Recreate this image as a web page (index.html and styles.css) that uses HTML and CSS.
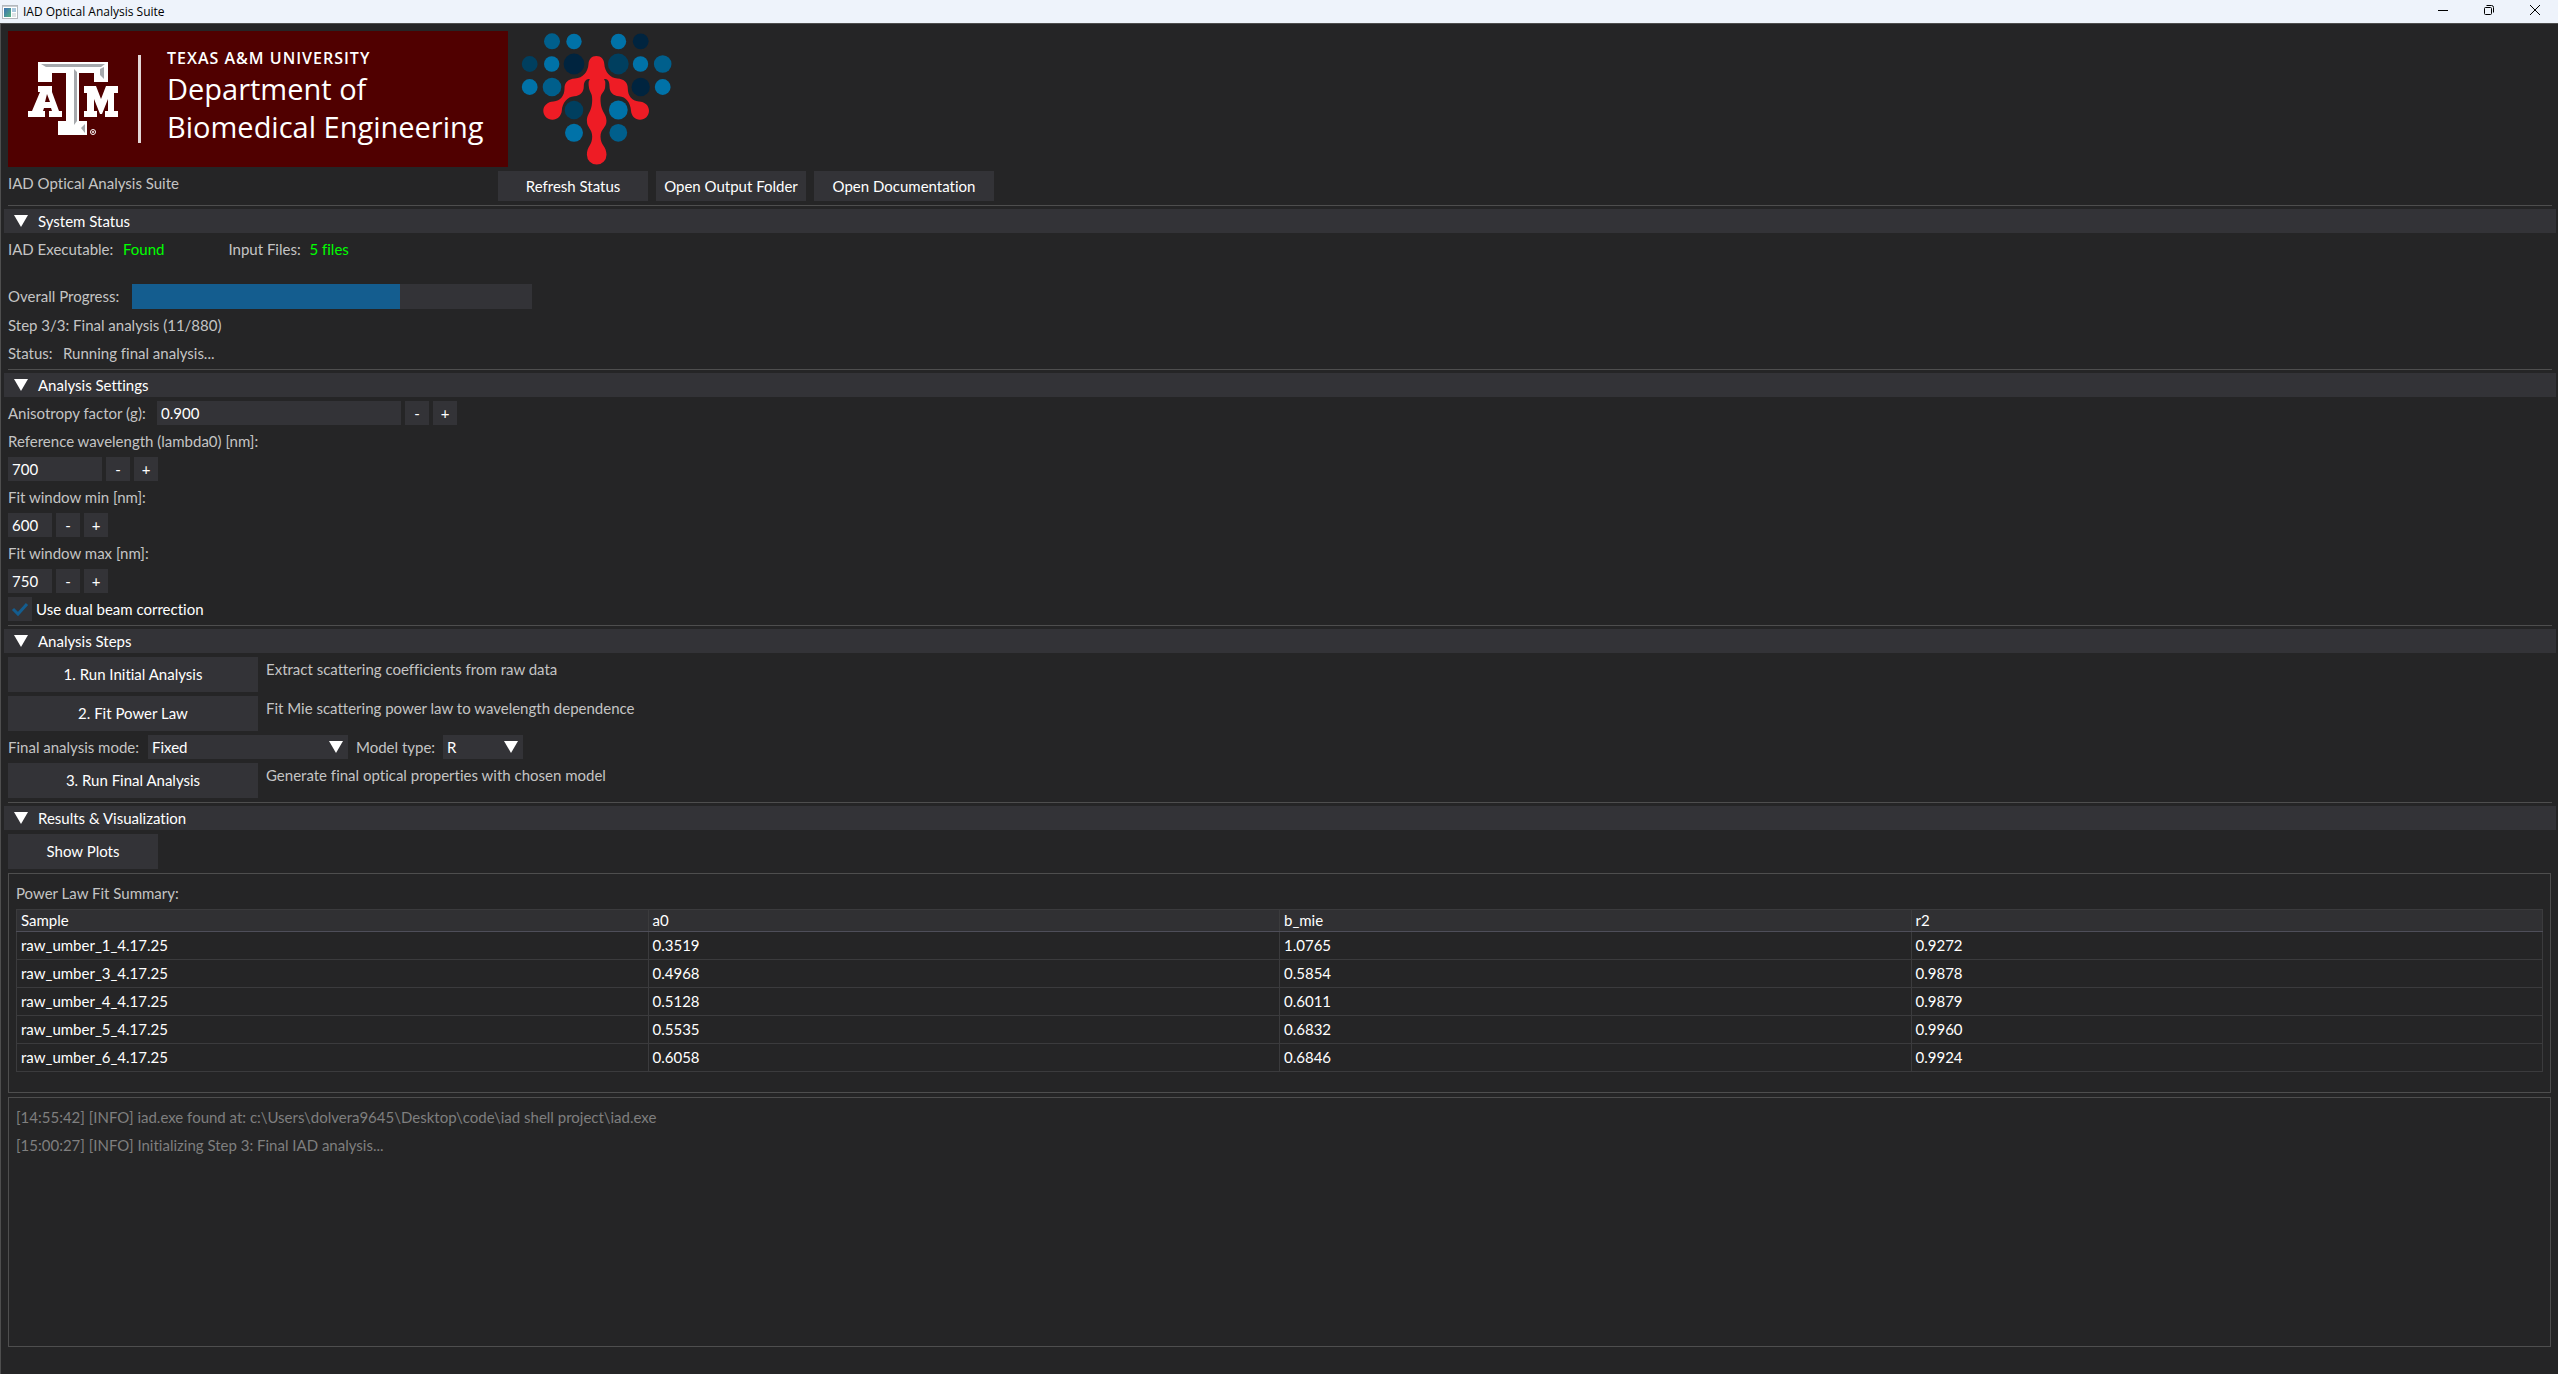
FILE: index.html
```html
<!DOCTYPE html>
<html lang="en">
<head>
<meta charset="utf-8">
<title>IAD Optical Analysis Suite</title>
<link rel="stylesheet" href="styles.css">
</head>
<body>
<header class="titlebar">
  <svg class="app-icon" width="16" height="14" viewBox="0 0 16 14" aria-hidden="true">
    <defs><linearGradient id="pane" x1="0" y1="0" x2="1" y2="1"><stop offset="0" stop-color="#3a6fb5"/><stop offset="1" stop-color="#57b380"/></linearGradient></defs>
    <rect x="0.5" y="0.5" width="15" height="13" fill="#fff" stroke="#b4b8bd"/>
    <rect x="1" y="1" width="14" height="1" fill="#c9ccd0"/>
    <rect x="2" y="3" width="7" height="9" fill="url(#pane)"/>
    <rect x="10" y="3" width="4" height="4" fill="#a9c8dd"/>
    <rect x="10" y="8" width="4" height="4" fill="#dfe3e6"/>
  </svg>
  <span class="window-title">IAD Optical Analysis Suite</span>
  <div class="window-controls">
    <button type="button" aria-label="Minimize"><svg width="12" height="12" viewBox="0 0 12 12"><path d="M1 6.5h10" stroke="#000"/></svg></button>
    <button type="button" aria-label="Restore"><svg width="12" height="12" viewBox="0 0 12 12" fill="none" stroke="#000"><rect x="1.500" y="3.500" width="7" height="7" rx="1"/><path d="M3.500 1.500h5a2 2 0 0 1 2 2v5"/></svg></button>
    <button type="button" aria-label="Close"><svg width="12" height="12" viewBox="0 0 12 12"><path d="M1 1l10 10M11 1L1 11" stroke="#000"/></svg></button>
  </div>
</header>

<main class="app">
  <div class="logos">
    <div class="banner">
      <svg class="emblem" width="90" height="76" viewBox="0 0 90 76" role="img" aria-label="Texas A&amp;M emblem">
        <g fill="#fff">
          <path d="M10 1h70v20H66v-9H51v48h8v14H30V60h8V12H24v9H10z"/>
          <path fill-rule="evenodd" d="M10 25h14v6l7 19h3v6H21v-6h3l-1-3h-7l-1 3h2v6H0v-6h4l8-19h-2zM17 41h5l-3-8z"/>
          <path d="M56 25h12l5 13 5-13h12v7h-4v18h4v6H77v-6h3V38l-6 15h-2l-6-15v12h3v6H56v-6h3V32h-3z"/>
        </g>
        <path d="M13 3l5 3h55l4-3zM76 6v12l-4-4V8zM46 8l3 3v49l-3 4zM57 63v9l-4-5z" fill="#a6a9ad"/>
        <circle cx="65" cy="71" r="2.500" fill="none" stroke="#fff"/>
        <circle cx="65" cy="71" r="1" fill="#fff"/>
      </svg>
      <div class="banner-rule"></div>
      <div class="banner-text">
        <span class="university">TEXAS A&amp;M UNIVERSITY</span>
        <span class="department">Department of<br>Biomedical Engineering</span>
      </div>
    </div>
    <svg class="network" width="160" height="136" viewBox="516 31 160 136" role="img" aria-label="Network logo">
      <g fill="#0072a8">
        <circle cx="574" cy="41.500" r="7.700"/><circle cx="618.500" cy="41.500" r="7.700"/>
        <circle cx="551.700" cy="64" r="7.700"/><circle cx="640.500" cy="64" r="7.700"/>
        <circle cx="529.700" cy="87" r="7.900"/><circle cx="662.700" cy="87" r="7.900"/>
        <circle cx="618.300" cy="110" r="9.400"/><circle cx="574" cy="132.800" r="9"/>
      </g>
      <g fill="#005f8c">
        <circle cx="552" cy="41.300" r="8"/><circle cx="662.700" cy="64" r="8.800"/>
        <circle cx="552" cy="87" r="9.300"/><circle cx="618.300" cy="132.800" r="8.900"/>
      </g>
      <g fill="#003f5f">
        <circle cx="529.700" cy="64" r="7.900"/><circle cx="618.300" cy="64" r="10.400"/><circle cx="574" cy="110" r="9.300"/>
      </g>
      <g fill="#00243f">
        <circle cx="640.700" cy="41.300" r="7.900"/><circle cx="574" cy="64" r="10.400"/><circle cx="640.700" cy="87" r="9.200"/>
      </g>
      <path fill="#ee1c25" d="M596.300 56c5 0 7.700 3.500 8 8 .5 8 6 14 13 14.500 7 .5 10.500 4 10.500 10 0 7 4 12.500 11 13 6 .3 10.200 4 10.200 9.300 0 5-4 9-9 9s-8.500-3.800-9-9c-.5-8-5-14-12-14.500-6-.5-9.500-4-9.500-10 0-5-2-8-5.500-7 1.500 2 1.500 3 1.200 7 0 6-4.700 6-4.700 13 0 13 6 14 6 21.500s-6 7.500-6 16 6 9.500 6 18a9.800 9.800 0 0 1-19.600 0c0-8.500 5.300-9.500 5.300-18s-5.300-8.500-5.300-16 5.300-8.500 5.300-21.500c0-7-3-7-3.400-13-.3-4-.3-5 1-7-3-1-6 2-6 7 0 6-3.500 9.500-9.500 10-7 .5-12 6.500-12.500 14.500-.5 5.200-4.500 9-9.300 9-5 0-9.200-4-9.200-9s4.200-9 10.200-9.300c7-.5 11-6 11-13 0-6 3.500-9.500 10.500-10 8-.5 13-6.500 13.500-14.500.3-4.500 3-8 7.800-8z"/>
    </svg>
  </div>

  <div class="row toolbar">
    <span class="app-name">IAD Optical Analysis Suite</span>
    <button type="button" class="btn">Refresh Status</button>
    <button type="button" class="btn">Open Output Folder</button>
    <button type="button" class="btn btn-wide">Open Documentation</button>
  </div>

  <hr>
  <details open>
    <summary><svg class="arrow" width="14" height="12" viewBox="0 0 14 12"><path d="M0 0h14L7 12z"/></svg>System Status</summary>
    <div class="stack">
      <div class="row status-line">
        <span class="label-executable">IAD Executable:</span><span class="ok">Found</span>
        <span class="second-item">Input Files:</span><span class="ok">5 files</span>
      </div>
      <div class="row">
        <span id="progress-label" class="label-progress">Overall Progress:</span>
        <div class="progress" role="progressbar" aria-labelledby="progress-label" aria-valuenow="67"><div class="progress-fill" style="width:67%"></div></div>
      </div>
      <div class="row">Step 3/3: Final analysis (11/880)</div>
      <div class="row"><span class="label-status">Status:</span><span>Running final analysis...</span></div>
    </div>
  </details>

  <hr>
  <details open>
    <summary><svg class="arrow" width="14" height="12" viewBox="0 0 14 12"><path d="M0 0h14L7 12z"/></svg>Analysis Settings</summary>
    <div class="stack">
      <div class="row">
        <label for="anisotropy" class="label-anisotropy">Anisotropy factor (g):</label>
        <div class="stepper stepper-large"><input id="anisotropy" type="text" value="0.900"><button type="button">-</button><button type="button">+</button></div>
      </div>
      <label for="wavelength">Reference wavelength (lambda0) [nm]:</label>
      <div class="stepper stepper-medium"><input id="wavelength" type="text" value="700"><button type="button">-</button><button type="button">+</button></div>
      <label for="fit-min">Fit window min [nm]:</label>
      <div class="stepper"><input id="fit-min" type="text" value="600"><button type="button">-</button><button type="button">+</button></div>
      <label for="fit-max">Fit window max [nm]:</label>
      <div class="stepper"><input id="fit-max" type="text" value="750"><button type="button">-</button><button type="button">+</button></div>
      <label class="check"><input type="checkbox" checked><svg width="24" height="24" viewBox="0 0 24 24"><path d="M5 12l5 5 9-10" fill="none" stroke="#145d8f" stroke-width="3"/></svg>Use dual beam correction</label>
    </div>
  </details>

  <hr>
  <details open>
    <summary><svg class="arrow" width="14" height="12" viewBox="0 0 14 12"><path d="M0 0h14L7 12z"/></svg>Analysis Steps</summary>
    <div class="stack">
      <div class="row"><button type="button" class="btn btn-step">1. Run Initial Analysis</button><span>Extract scattering coefficients from raw data</span></div>
      <div class="row"><button type="button" class="btn btn-step">2. Fit Power Law</button><span>Fit Mie scattering power law to wavelength dependence</span></div>
      <div class="row">
        <label for="mode" class="label-mode">Final analysis mode:</label>
        <div class="combo"><select id="mode"><option>Fixed</option></select><svg class="arrow" width="14" height="12" viewBox="0 0 14 12"><path d="M0 0h14L7 12z"/></svg></div>
        <label for="model">Model type:</label>
        <div class="combo combo-small"><select id="model"><option>R</option></select><svg class="arrow" width="14" height="12" viewBox="0 0 14 12"><path d="M0 0h14L7 12z"/></svg></div>
      </div>
      <div class="row"><button type="button" class="btn btn-step">3. Run Final Analysis</button><span>Generate final optical properties with chosen model</span></div>
    </div>
  </details>

  <hr>
  <details open>
    <summary><svg class="arrow" width="14" height="12" viewBox="0 0 14 12"><path d="M0 0h14L7 12z"/></svg>Results &amp; Visualization</summary>
    <div class="stack">
      <div class="row"><button type="button" class="btn btn-plots">Show Plots</button></div>
      <section class="panel results">
        <div id="summary-title">Power Law Fit Summary:</div>
        <table aria-labelledby="summary-title">
          <thead><tr><th>Sample</th><th>a0</th><th>b_mie</th><th>r2</th></tr></thead>
          <tbody>
            <tr><td>raw_umber_1_4.17.25</td><td>0.3519</td><td>1.0765</td><td>0.9272</td></tr>
            <tr><td>raw_umber_3_4.17.25</td><td>0.4968</td><td>0.5854</td><td>0.9878</td></tr>
            <tr><td>raw_umber_4_4.17.25</td><td>0.5128</td><td>0.6011</td><td>0.9879</td></tr>
            <tr><td>raw_umber_5_4.17.25</td><td>0.5535</td><td>0.6832</td><td>0.9960</td></tr>
            <tr><td>raw_umber_6_4.17.25</td><td>0.6058</td><td>0.6846</td><td>0.9924</td></tr>
          </tbody>
        </table>
      </section>
      <section class="panel log" aria-label="Log">
        <div>[14:55:42] [INFO] iad.exe found at: c:\Users\dolvera9645\Desktop\code\iad shell project\iad.exe</div>
        <div>[15:00:27] [INFO] Initializing Step 3: Final IAD analysis...</div>
      </section>
    </div>
  </details>
</main>
</body>
</html>
```
FILE: styles.css
```css
* { box-sizing: border-box; }

body {
  margin: 0;
  min-height: 100vh;
  display: flex;
  flex-direction: column;
  background: #252526;
  color: #c4c4c4;
  font: 15px/24px Lato, sans-serif;
  font-variant-ligatures: none;
}

button, input, select { font: inherit; font-variant-ligatures: none; color: #fff; border: 0; margin: 0; border-radius: 0; }
button { padding: 0; background: #333337; cursor: pointer; }
svg { display: block; flex: none; }

/* Window title bar */
.titlebar {
  display: flex;
  align-items: center;
  height: 23px;
  padding-left: 2px;
  background: #eef3fb;
  color: #000;
}
.window-title { margin-left: 5px; font: 12px/16px "Open Sans", sans-serif; }
.window-controls { display: flex; align-self: flex-start; margin-left: auto; }
.window-controls button { display: flex; width: 46px; height: 20px; align-items: center; justify-content: center; background: none; }

/* Application body */
.app {
  flex: 1;
  display: flex;
  flex-direction: column;
  gap: 4px;
  padding: 7px 6px 8px 7px;
  border: solid #4e4e4e;
  border-width: 1px 0 0 1px;
}
.row { display: flex; align-items: flex-start; gap: 8px; white-space: nowrap; }
.stack { display: flex; flex-direction: column; align-items: stretch; gap: 4px; padding-top: 4px; }

.logos { display: flex; gap: 8px; }
.banner { display: flex; align-items: center; width: 500px; height: 136px; padding-left: 20px; background: #500000; color: #fff; }
.banner-rule { width: 3px; height: 88px; margin: 0 26px 0 20px; background: #e3d6d6; }
.banner-text { display: flex; flex-direction: column; padding-bottom: 6px; font-family: "Open Sans", sans-serif; white-space: nowrap; }
.university { font-size: 16px; line-height: 24px; font-weight: 600; letter-spacing: 1px; }
.department { font-size: 29px; line-height: 38px; }

.app-name { width: 482px; }
.btn { width: 150px; height: 30px; }
.btn-wide { width: 180px; }
.btn-step { width: 250px; height: 35px; padding-bottom: 2px; }
.btn-plots { height: 35px; padding-bottom: 2px; }

hr { width: 100%; height: 1px; margin: 0 0 -1px; border: 0; background: #4e4e4e; }

summary {
  display: flex;
  align-items: center;
  gap: 10px;
  height: 24px;
  margin: 0 -4px;
  padding-left: 10px;
  background: #333337;
  color: #fff;
  list-style: none;
  cursor: pointer;
}
.arrow { fill: #fff; }

/* Label columns */
.label-executable { width: 107px; }
.label-progress { width: 116px; }
.label-status { width: 47px; }
.label-anisotropy { width: 141px; }
.label-mode { width: 132px; }

.status-line { margin-bottom: 19px; }
.second-item { width: 73px; margin-left: 56px; }
.ok { color: #00ff00; }
.progress { width: 400px; height: 25px; background: #333337; }
.progress-fill { height: 100%; background: #145d8f; }

/* Numeric fields with step buttons */
.stepper { display: flex; gap: 4px; width: 100px; }
.stepper-medium { width: 150px; }
.stepper-large { width: 300px; }
.stepper input { flex: 1; min-width: 0; height: 24px; padding: 0 4px; background: #333337; }
.stepper button { width: 24px; height: 24px; }

.check { display: flex; align-self: flex-start; gap: 4px; color: #fff; }
.check input { position: absolute; opacity: 0; }
.check svg { background: #333337; }

.combo { display: grid; width: 200px; align-items: center; background: #333337; }
.combo-small { width: 80px; }
.combo select, .combo .arrow { grid-area: 1 / 1; }
.combo select { appearance: none; height: 24px; padding: 0 4px; background: none; }
.combo .arrow { justify-self: end; margin-right: 5px; pointer-events: none; }

/* Framed regions */
.panel { margin-right: 1px; border: 1px solid #4e4e4e; padding: 7px; }
.results { min-height: 220px; }
.log { min-height: 250px; display: flex; flex-direction: column; gap: 4px; color: #7f7f7f; }

table { width: 100%; margin-top: 4px; border: 1px solid #4e4e59; border-collapse: collapse; table-layout: fixed; color: #fff; }
th, td { padding: 0 4px; text-align: left; font-weight: 400; border: 1px solid #3b3b3d; }
th { height: 22px; padding-bottom: 2px; line-height: 18px; background: #303033; border-bottom-color: #4e4e59; }
td { height: 28px; padding-bottom: 2px; }
```
